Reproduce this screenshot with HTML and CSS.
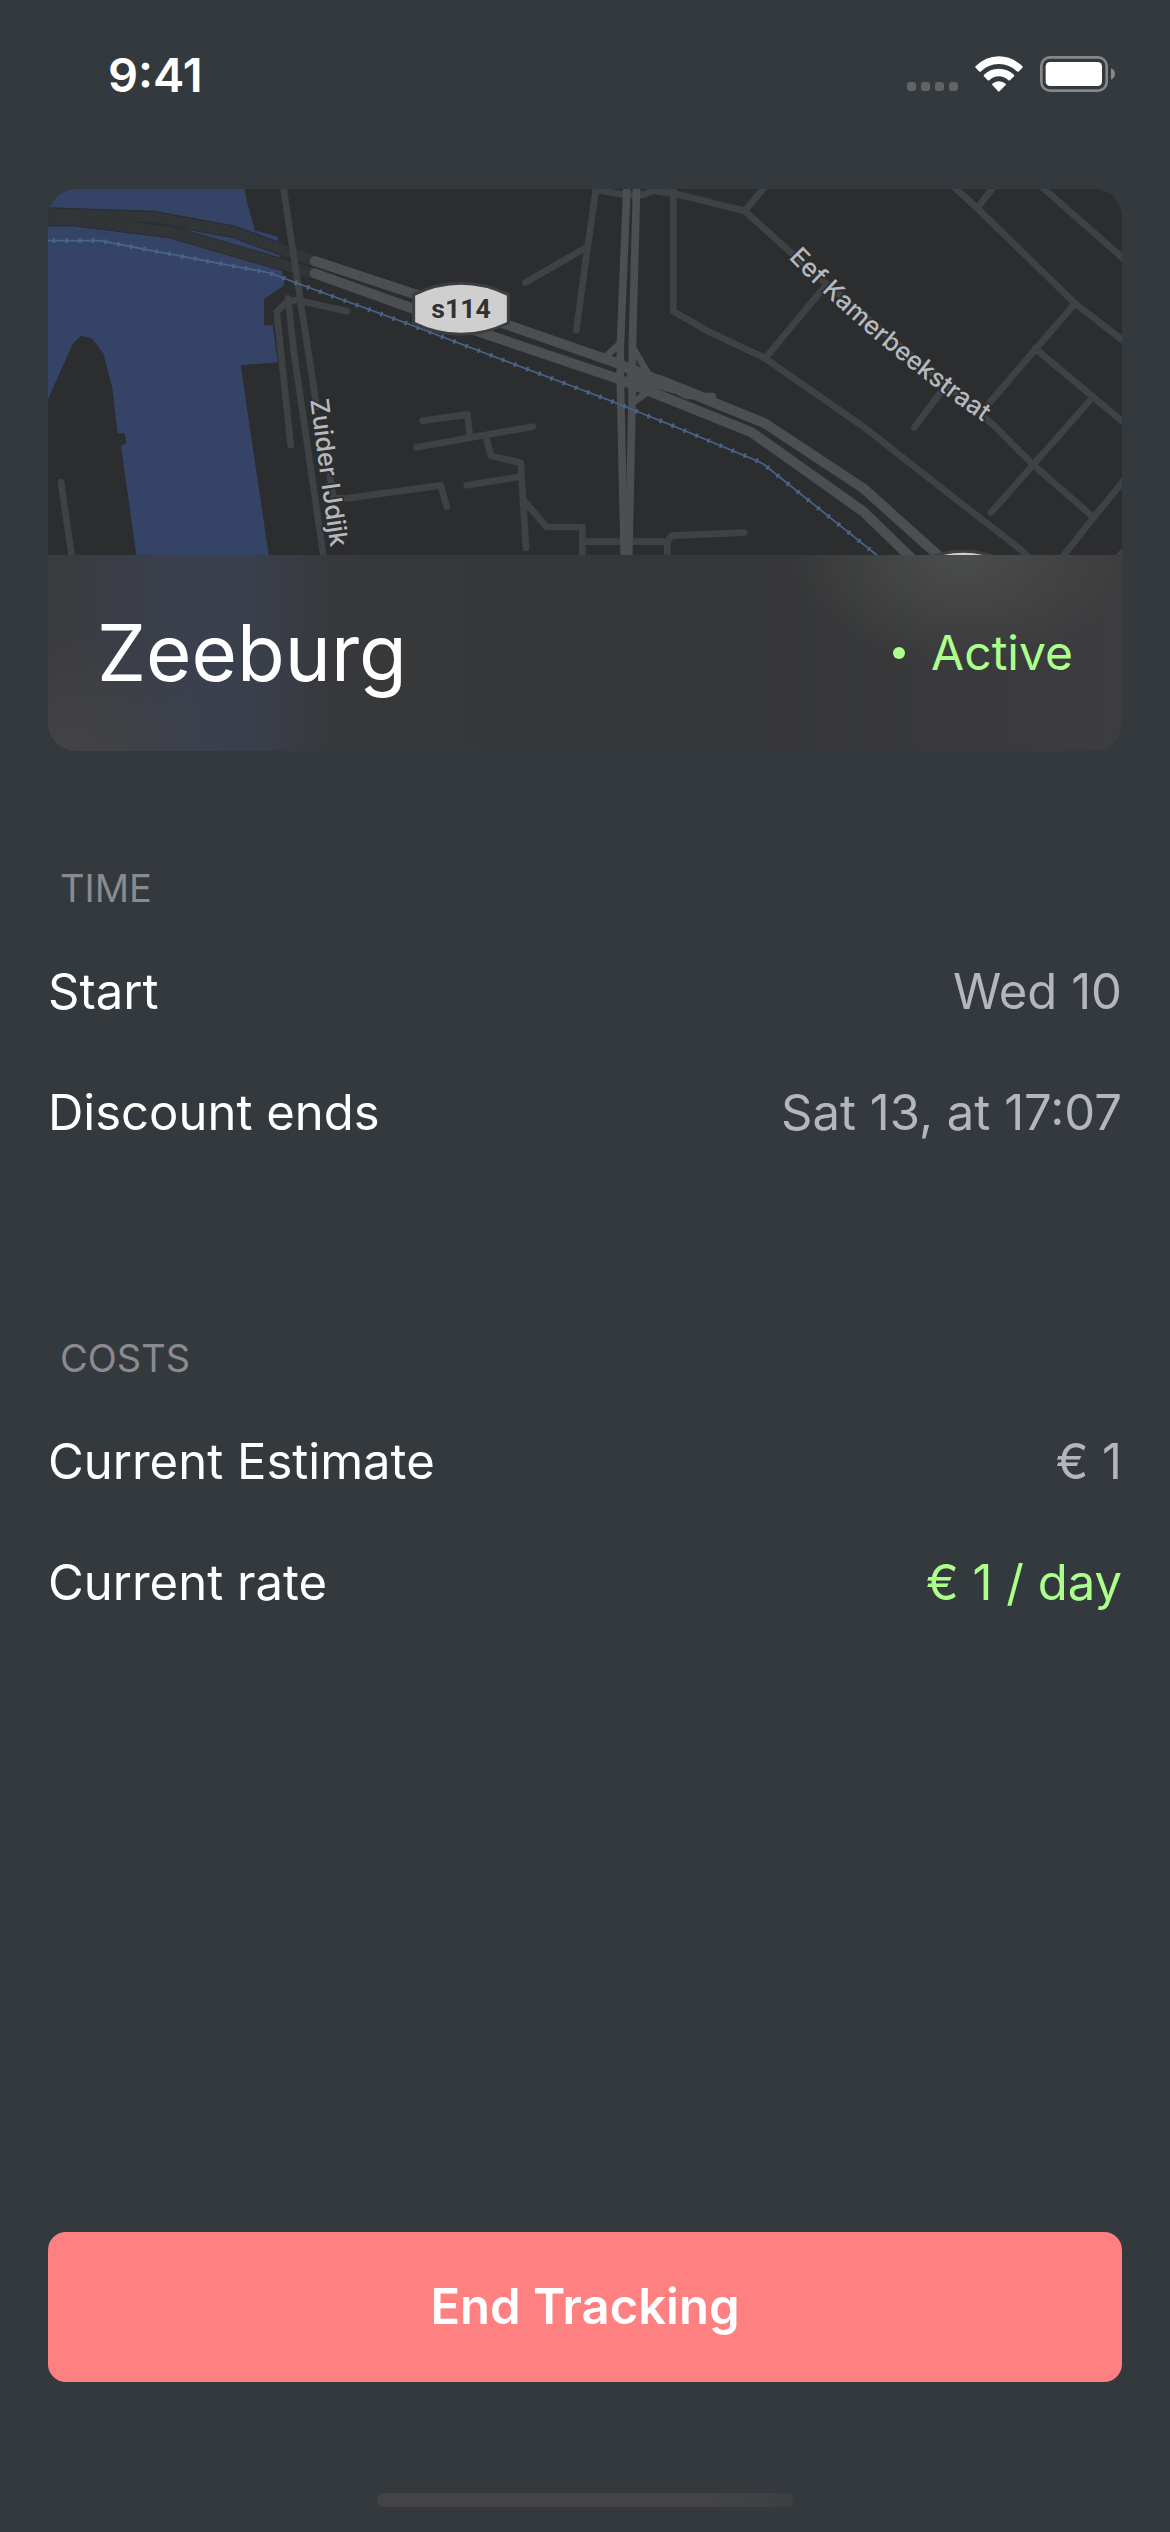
FILE: index.html
```html
<!DOCTYPE html>
<html lang="en">
<head>
<meta charset="utf-8">
<meta name="viewport" content="width=device-width, initial-scale=1">
<title>Zeeburg</title>
<link rel="stylesheet" href="styles.css">
</head>
<body>
<div class="screen">
  <header class="status-bar">
    <time class="clock">9:41</time>
    <div class="indicators">
      <svg class="signal" viewBox="0 0 51 10" aria-hidden="true">
        <rect x="0" y="0" width="9" height="9" rx="3"/><rect x="14" y="0" width="9" height="9" rx="3"/><rect x="28" y="0" width="9" height="9" rx="3"/><rect x="42" y="0" width="9" height="9" rx="3"/>
      </svg>
      <svg class="wifi" viewBox="0 0 147 108" aria-hidden="true">
        <path d="M1 31Q33 0 73 0T146 31Q147 33 145 35L134 46Q131 48 129 46Q106 23 73 23T18 46Q16 48 13 46L2 35Q0 33 1 31Z"/>
        <path d="M27 57Q46 38 73 38T120 57Q121 60 119 62L107 73Q105 75 102 73Q90 61 73 61T44 73Q42 75 39 73L28 62Q26 60 27 57Z"/>
        <path d="M53 84Q61 76 73 76T94 84Q96 86 94 88L75 107Q73 109 71 107L53 88Q51 86 53 84Z"/>
      </svg>
      <svg class="battery" viewBox="0 0 225 108" aria-hidden="true">
        <rect class="battery-shell" x="4" y="4" width="196" height="100" rx="26"/>
        <rect class="battery-level" x="17" y="18" width="169" height="72" rx="13"/>
        <path class="battery-tip" d="M213 37Q225 43 225 54T213 71Z"/>
      </svg>
    </div>
  </header>

  <main class="content">
    <section class="card">
      <svg class="map" viewBox="24 27 3222 1098" preserveAspectRatio="xMidYMid slice" role="img" aria-label="Map of Zeeburg">
        <path class="water" d="M24 27H614L620 62 644 151 714 170 720 225 728 285 733 316 672 358V436H698L713 547 602 556 686 1125H289L243 797 260 790 254 760H233L217 625 190 520 157 476 123 467 98 492 24 658Z"/>
        <g class="bridge-edge">
          <path d="M24 101 340 111 580 155 820 243"/>
          <path d="M24 120H100L390 156 730 255 820 280"/>
        </g>
        <g class="bridge">
          <path d="M24 101 340 111 580 155 820 243"/>
          <path d="M24 120H100L390 156 730 255 820 280"/>
        </g>
        <g class="street">
          <path d="M730 20 778 340 830 680"/>
          <path d="M921 394 770 360 744 364 710 395 752 795"/>
          <path d="M744 355 762 520 852 1140"/>
          <path d="M63 907 97 1140"/>
          <path d="M870 890 880 955 920 955 1202 916 1220 980"/>
          <path d="M1148 722 1282 704 1290 770"/>
          <path d="M1130 802 1478 740M1338 772 1353 828 1442 848 1458 1104M1280 916 1440 890M1450 960 1520 1041H1627V1140M1630 1085H1882V1140M1882 1085 1895 1067 2112 1058"/>
          <path d="M1669 20 1643 200 1609 450M1643 200 1456 308M1670 30 1755 44 1810 44 1840 32 1900 40 2114 93 2250 215 2340 295 2400 345"/>
          <path d="M2114 93 2175 20M1900 27V394L2010 457 2160 527 2190 545 2470 740 2680 905 2950 1115 2970 1140"/>
          <path d="M2180 530 2350 325M2400 345 2860 735 2980 855 3158 1010"/>
          <path d="M2735 15 2812 85 3105 370 3260 490M2815 80 2865 15"/>
          <path d="M3000 15 3260 245M3105 370 2830 690M2985 505 3260 735M3160 650 2853 998M3260 890 3155 1020 3060 1140M2700 640 2623 742M3225 1140 3260 1105"/>
        </g>
        <g class="highway">
          <path d="M824 243 1080 328 1410 437 1720 545 1830 590 2175 730 2470 925 2710 1140"/>
          <path d="M824 280 1080 372 1330 460 1730 595 1820 630 2135 757 2470 995 2620 1140"/>
        </g>
        <g class="avenue">
          <path d="M1761 15 1741 500V600L1753 1140"/>
          <path d="M1790 15 1777 500V620L1766 1140"/>
        </g>
        <g class="ramp">
          <path d="M1741 490 1695 532M1777 500 1830 590M1784 665 1830 630M1770 560 1940 648H2018"/>
          <path d="M1770 590 1860 595 2010 655M1730 545 1800 600 1900 630"/>
        </g>
        <path class="rail" d="M24 182H180L300 205 690 279 780 313 1100 430 1700 658 1900 738 2150 842 2170 852 2510 1125"/>
        <path class="rail-ties" d="M38 182H180L300 205 690 279 780 313 1100 430 1700 658 1900 738 2150 842 2170 852 2510 1125"/>
        <g class="shield">
          <path d="M1121 344Q1263 276 1405 344V429Q1263 497 1121 429Z"/>
          <path d="M2628 1150Q2770 1078 2912 1150V1240H2628Z"/>
        </g>
        <text class="shield-text" x="1263" y="413">s114</text>
        <path id="dijk" class="guide" d="M811 660Q840 890 892 1240"/>
        <path id="straat" class="guide" d="M2245 234Q2500 500 2850 740L2960 830"/>
        <text class="street-name"><textPath href="#dijk">Zuider IJdijk</textPath></text>
        <text class="street-name"><textPath href="#straat">Eef Kamerbeekstraat</textPath></text>
      </svg>
      <div class="card-footer">
        <h1 class="place">Zeeburg</h1>
        <p class="status">Active</p>
      </div>
    </section>

    <section class="group">
      <h2 class="group-title">TIME</h2>
      <dl class="rows">
        <div class="row"><dt>Start</dt><dd>Wed 10</dd></div>
        <div class="row"><dt>Discount ends</dt><dd>Sat 13, at 17:07</dd></div>
      </dl>
    </section>

    <section class="group">
      <h2 class="group-title">COSTS</h2>
      <dl class="rows">
        <div class="row"><dt>Current Estimate</dt><dd>€ 1</dd></div>
        <div class="row"><dt>Current rate</dt><dd class="good">€ 1 / day</dd></div>
      </dl>
    </section>
  </main>

  <footer class="actions">
    <button class="end-button" type="button">End Tracking</button>
    <div class="home-indicator"></div>
  </footer>
</div>
</body>
</html>
```
FILE: styles.css
```css
* { box-sizing: border-box; }

body {
  margin: 0;
  background: #34393d;
  color: #fff;
  font-family: Inter, "Liberation Sans", sans-serif;
  font-size: 49px;
  line-height: 60px;
}

h1, h2, p, dl, dd { margin: 0; font-weight: 400; }

.screen {
  display: flex;
  flex-direction: column;
  min-height: 100vh;
  padding: 0 48px;
}

.status-bar {
  display: flex;
  justify-content: space-between;
  align-items: flex-start;
  padding: 45px 7px 84px 60px;
}

.clock { font-size: 47px; font-weight: 600; }

.indicators {
  display: flex;
  align-items: flex-end;
  gap: 17px;
  padding-top: 11px;
}

.signal { width: 51px; height: 10px; fill: #606467; }
.wifi { width: 48px; height: 36px; fill: #fff; }
.battery { width: 75px; height: 36px; }
.battery-shell { fill: none; stroke: #85888a; stroke-width: 8; }
.battery-level { fill: #fff; }
.battery-tip { fill: #85888a; }

.content { display: flex; flex-direction: column; }

.card {
  overflow: hidden;
  border-radius: 28px;
  background: #2c2d2f;
}

.map { display: block; width: 100%; height: 366px; }

.water { fill: #354466; }
.bridge-edge, .bridge, .street, .highway, .avenue, .ramp, .rail, .rail-ties, .guide { fill: none; }
.bridge-edge { stroke: #2a2d30; stroke-width: 38; }
.bridge { stroke: #313537; stroke-width: 32; }
.street { stroke: #3f4245; stroke-width: 20; stroke-linecap: round; stroke-linejoin: round; }
.highway { stroke: #4b4f52; stroke-width: 30; stroke-linecap: round; stroke-linejoin: round; }
.avenue { stroke: #4b4f52; stroke-width: 23; }
.ramp { stroke: #4b4f52; stroke-width: 20; stroke-linecap: round; }
.rail { stroke: #4a6489; stroke-width: 5; }
.rail-ties { stroke: #4a6489; stroke-width: 14; stroke-dasharray: 7 32; }
.shield { fill: #cfcfd0; stroke: #3d3e41; stroke-width: 9; }

.shield-text {
  fill: #303133;
  font-size: 80px;
  font-weight: 700;
  font-family: Roboto, sans-serif;
  text-anchor: middle;
}

.street-name {
  fill: #b5b8bc;
  stroke: #2c2d2f;
  stroke-width: 10;
  paint-order: stroke;
  font-size: 76px;
  font-weight: 500;
}

.card-footer {
  display: flex;
  justify-content: space-between;
  align-items: center;
  height: 196px;
  padding: 0 49px;
  background:
    radial-gradient(ellipse 170px 110px at 85% 0, #4b4c4c, transparent),
    radial-gradient(ellipse 180px 120px at 0 100%, #444446, transparent),
    linear-gradient(90deg, #3a3b3d 0, #3a3e48 8%, #3a404e 13%, #3a3f4c 19%, #38393d 26%, #37383a 30%, #353637 64%, #3d3d3f 100%);
}

.place { font-size: 78px; line-height: 96px; }

.status {
  display: flex;
  align-items: center;
  gap: 26px;
  color: #acff8b;
  font-size: 48px;
}

.status::before {
  content: "";
  width: 12px;
  height: 12px;
  border-radius: 50%;
  background: currentColor;
}

.group { padding-top: 94px; }
.group + .group { padding-top: 142px; }

.group-title {
  padding: 13px 12px;
  color: #8b8a90;
  font-size: 38px;
}

.row {
  display: flex;
  justify-content: space-between;
  align-items: center;
  height: 121px;
}

.row dd { color: #b5b5c1; }
.row .good { color: #acff8b; }

.actions {
  display: flex;
  flex-direction: column;
  align-items: center;
  gap: 111px;
  margin-top: auto;
  padding: 48px 0 25px;
}

.end-button {
  width: 100%;
  height: 150px;
  border: 0;
  border-radius: 18px;
  background: #ff8080;
  color: #fff;
  font: inherit;
  font-weight: 600;
}

.home-indicator {
  width: 417px;
  height: 14px;
  border-radius: 7px;
  background: linear-gradient(90deg, #444446 80%, #3c3f42);
}
```
